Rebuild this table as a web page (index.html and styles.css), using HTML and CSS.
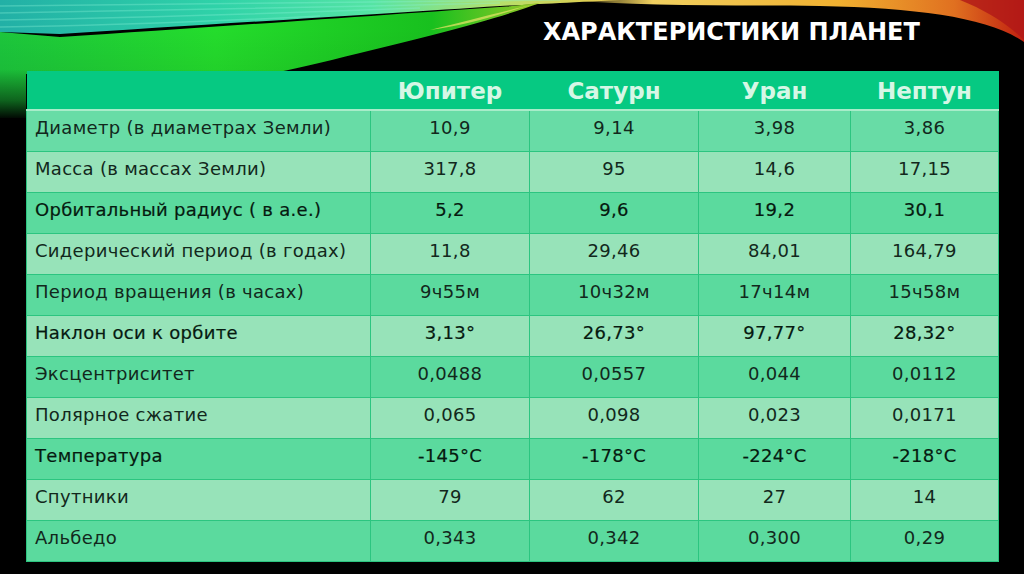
FILE: index.html
```html
<!DOCTYPE html>
<html lang="ru">
<head>
<meta charset="utf-8">
<title>Характеристики планет</title>
<link rel="stylesheet" href="styles.css">
</head>
<body>
<div class="slide">
  <svg class="backdrop" width="1024" height="574" viewBox="0 0 1024 574" aria-hidden="true">
    <defs>
      <linearGradient id="teal" x1="0" y1="0" x2="1" y2="0">
        <stop offset="0" stop-color="#22b0a6"/>
        <stop offset="0.35" stop-color="#2fd2a8"/>
        <stop offset="0.6" stop-color="#55e4a4"/>
        <stop offset="0.8" stop-color="#b4e06c"/>
        <stop offset="1" stop-color="#e8c848"/>
      </linearGradient>
      <linearGradient id="green" x1="0" y1="0" x2="1" y2="0">
        <stop offset="0" stop-color="#1cc63c"/>
        <stop offset="0.4" stop-color="#24dc2c"/>
        <stop offset="0.8" stop-color="#18c01e"/>
        <stop offset="1" stop-color="#9ac828"/>
      </linearGradient>
      <linearGradient id="greenV" x1="0" y1="30" x2="0" y2="118" gradientUnits="userSpaceOnUse">
        <stop offset="0" stop-color="#000" stop-opacity="0"/>
        <stop offset="0.45" stop-color="#000" stop-opacity="0.05"/>
        <stop offset="0.8" stop-color="#000" stop-opacity="0.5"/>
        <stop offset="1" stop-color="#000" stop-opacity="0.95"/>
      </linearGradient>
      <linearGradient id="gold" x1="0" y1="0" x2="1" y2="0">
        <stop offset="0" stop-color="#e0c850" stop-opacity="0"/>
        <stop offset="0.2" stop-color="#f0d060"/>
        <stop offset="0.6" stop-color="#f0b030"/>
        <stop offset="0.85" stop-color="#e07020"/>
        <stop offset="1" stop-color="#c02010"/>
      </linearGradient>
    </defs>
    <path d="M0,0 L620,0 C560,3 520,5 500,6 C380,14 200,25 60,34 L0,32 Z" fill="url(#teal)"/>
    <g stroke="#86f2d6" stroke-opacity="0.35" stroke-width="1.5" fill="none">
      <path d="M0,6 C150,5 350,3 560,0"/>
      <path d="M0,13 C150,11 330,7 500,3"/>
      <path d="M0,20 C120,18 260,14 420,8"/>
      <path d="M0,27 C90,26 200,22 320,16"/>
    </g>
    <path d="M0,32 L60,37 C200,28 380,15 512,6 L540,3 C500,18 430,36 360,53 C320,63 290,70 268,74 L26,74 L26,118 L0,118 Z" fill="url(#green)"/>
    <path d="M0,32 L60,37 C200,28 380,15 512,6 L540,3 C500,18 430,36 360,53 C320,63 290,70 268,74 L26,74 L26,118 L0,118 Z" fill="url(#greenV)"/>
    <path d="M430,30 C470,20 500,12 540,3 L520,8 C490,18 460,26 430,30 Z" fill="#d8e060" opacity="0.8"/>
    <path d="M560,0 L1024,0 L1024,42 C990,18 920,8 820,6 C720,5 640,6 560,0 Z" fill="url(#gold)"/>
    <path d="M960,0 L1024,0 L1024,40 C1005,22 985,10 960,0 Z" fill="#b01818" opacity="0.8"/>
  </svg>

  <header class="titlebar">
    <h1 class="title">ХАРАКТЕРИСТИКИ ПЛАНЕТ</h1>
  </header>

  <table class="planets">
    <colgroup>
      <col class="c-label">
      <col class="c-jup">
      <col class="c-sat">
      <col class="c-ura">
      <col class="c-nep">
    </colgroup>
    <thead>
      <tr>
        <th></th>
        <th>Юпитер</th>
        <th>Сатурн</th>
        <th>Уран</th>
        <th>Нептун</th>
      </tr>
    </thead>
    <tbody>
      <tr class="dark first"><td>Диаметр (в диаметрах Земли)</td><td>10,9</td><td>9,14</td><td>3,98</td><td>3,86</td></tr>
      <tr class="light"><td>Масса (в массах Земли)</td><td>317,8</td><td>95</td><td>14,6</td><td>17,15</td></tr>
      <tr class="dark strong"><td>Орбитальный радиус ( в а.е.)</td><td>5,2</td><td>9,6</td><td>19,2</td><td>30,1</td></tr>
      <tr class="light"><td>Сидерический период (в годах)</td><td>11,8</td><td>29,46</td><td>84,01</td><td>164,79</td></tr>
      <tr class="dark"><td>Период вращения (в часах)</td><td>9ч55м</td><td>10ч32м</td><td>17ч14м</td><td>15ч58м</td></tr>
      <tr class="light strong"><td>Наклон оси к орбите</td><td>3,13°</td><td>26,73°</td><td>97,77°</td><td>28,32°</td></tr>
      <tr class="dark"><td>Эксцентриситет</td><td>0,0488</td><td>0,0557</td><td>0,044</td><td>0,0112</td></tr>
      <tr class="light"><td>Полярное сжатие</td><td>0,065</td><td>0,098</td><td>0,023</td><td>0,0171</td></tr>
      <tr class="dark strong"><td>Температура</td><td>-145°C</td><td>-178°C</td><td>-224°C</td><td>-218°C</td></tr>
      <tr class="light"><td>Спутники</td><td>79</td><td>62</td><td>27</td><td>14</td></tr>
      <tr class="dark"><td>Альбедо</td><td>0,343</td><td>0,342</td><td>0,300</td><td>0,29</td></tr>
    </tbody>
  </table>
</div>
</body>
</html>
```

FILE: styles.css
```css
html, body {
  margin: 0;
  padding: 0;
  background: #000;
}

.slide {
  position: relative;
  width: 1024px;
  height: 574px;
  overflow: hidden;
  background: #000;
  font-family: "DejaVu Sans", "Liberation Sans", sans-serif;
}

.backdrop {
  position: absolute;
  top: 0;
  left: 0;
  z-index: 0;
}

.titlebar {
  position: relative;
  z-index: 1;
  height: 71px;
  display: flex;
  justify-content: flex-start;
  padding-left: 543px;
  box-sizing: border-box;
}

.title {
  margin: 0;
  padding-top: 16px;
  color: #ffffff;
  font-family: "DejaVu Sans", "Liberation Sans", sans-serif;
  font-weight: bold;
  font-size: 24px;
  line-height: 32px;
}

.planets {
  position: relative;
  z-index: 1;
  margin-left: 26px;
  width: 972px;
  border-collapse: collapse;
  table-layout: fixed;
}

.c-label { width: 344px; }
.c-jup { width: 159px; }
.c-sat { width: 169px; }
.c-ura { width: 152px; }
.c-nep { width: 148px; }

.planets th {
  height: 39px;
  box-sizing: border-box;
  background: #06c982;
  color: #d6f7e6;
  font-size: 23px;
  font-weight: bold;
  text-align: center;
  padding: 2px 0 0 0;
  border-bottom: 2px solid #a8ecc9;
}

.planets td {
  height: 41px;
  box-sizing: border-box;
  padding: 0 0 6px 0;
  font-size: 18px;
  letter-spacing: 0.3px;
  color: #12281c;
  text-align: center;
  vertical-align: middle;
  border: 1px solid #2cc580;
}

.planets td:first-child {
  text-align: left;
  padding-left: 8px;
}

.planets tr.dark td { background: #5bda9e; }
.planets tr.light td { background: #97e3b9; }
.planets tr.first td { background: #68dca6; }

.planets tr.strong td {
  color: #061a10;
  -webkit-text-stroke: 0.2px #061a10;
}
```
